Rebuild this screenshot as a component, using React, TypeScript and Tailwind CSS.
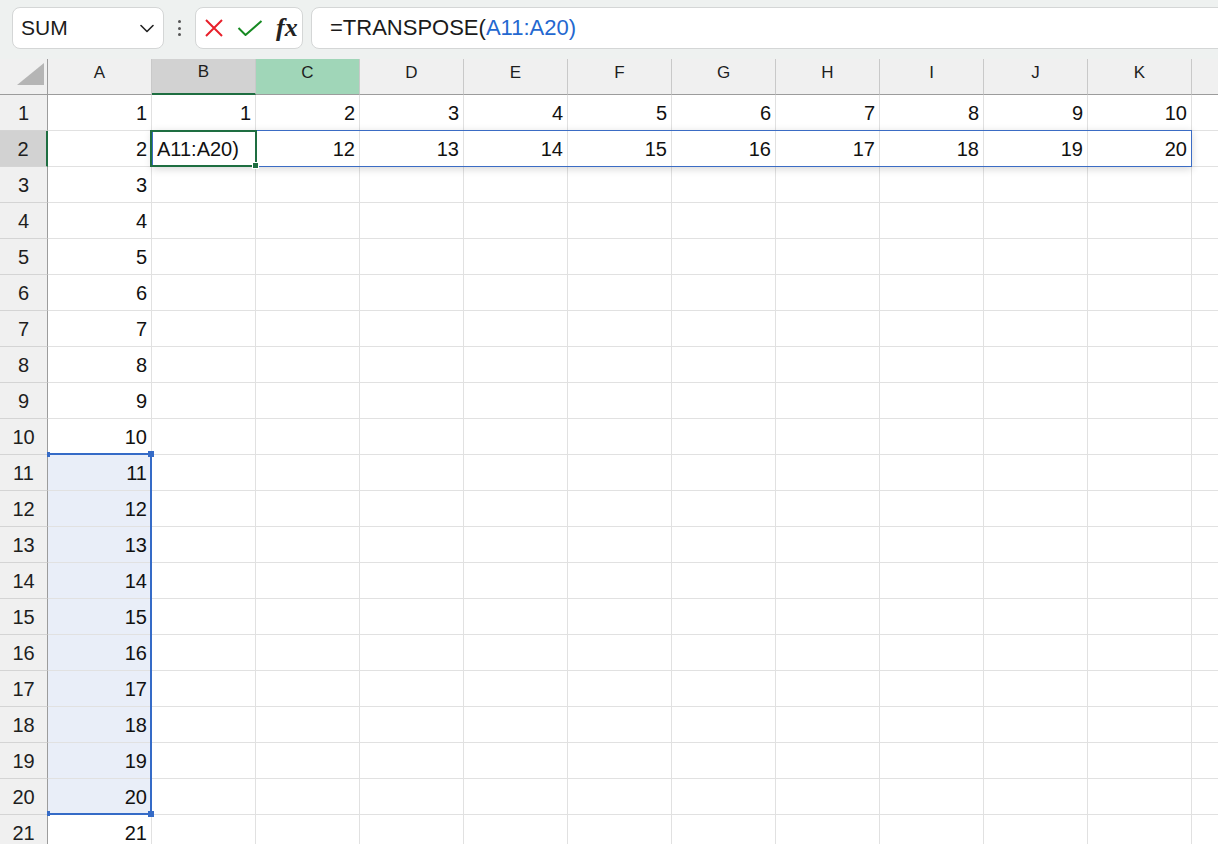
const COLS = ['A', 'B', 'C', 'D', 'E', 'F', 'G', 'H', 'I', 'J', 'K']
const ROWS = Array.from({ length: 21 }, (_, i) => i + 1)

// column A holds 1..21, row 1 holds 1..10 from B, row 2 is the spill of A11:A20
function cellValue(row: number, col: number) {
  if (col === 0) return String(row)
  if (row === 1) return String(col)
  if (row === 2 && col > 1) return String(col + 10)
  return ''
}

function NameBox() {
  return (
    <div className="flex h-[42px] w-[152px] items-center justify-between rounded-lg border border-[#d4d6d6] bg-white pl-[8px] pr-[9px]">
      <span className="text-[21px] text-[#1b1b1b]">SUM</span>
      <svg width="14" height="9" viewBox="0 0 14 9" fill="none">
        <path d="M1 1.5 L7 7.5 L13 1.5" stroke="#222" strokeWidth="1.6" strokeLinecap="round" strokeLinejoin="round" />
      </svg>
    </div>
  )
}

function FormulaButtons() {
  return (
    <div className="flex h-[42px] w-[108px] items-center rounded-lg border border-[#d4d6d6] bg-white pl-[8px]">
      <svg width="20" height="20" viewBox="0 0 20 20" fill="none">
        <path d="M2 2 L18 18 M18 2 L2 18" stroke="#e8202a" strokeWidth="2" />
      </svg>
      <svg className="ml-[13px]" width="26" height="16" viewBox="0 0 26 16" fill="none">
        <path d="M1.5 8 L8.5 15 L24.5 1" stroke="#168a22" strokeWidth="2" />
      </svg>
      <span className="ml-[13px] font-['Liberation_Serif',serif] text-[26px] font-bold italic leading-none text-[#222]">fx</span>
    </div>
  )
}

function Toolbar() {
  return (
    <div className="flex h-[59px] items-start overflow-hidden bg-[#eef1f0] pl-3 pt-[7px]">
      <NameBox />
      <div className="flex h-[42px] w-[31px] flex-col items-center justify-center gap-[3.5px]">
        <span className="h-[3px] w-[3px] rounded-full bg-[#555]" />
        <span className="h-[3px] w-[3px] rounded-full bg-[#555]" />
        <span className="h-[3px] w-[3px] rounded-full bg-[#555]" />
      </div>
      <FormulaButtons />
      <div className="-mr-4 ml-2 flex h-[42px] flex-1 items-center rounded-lg border border-[#d4d6d6] bg-white pb-[2px] pl-[18px] text-[22px] text-[#1b1b1b]">
        <span>=TRANSPOSE(</span>
        <span className="text-[#2468d0]">A11:A20)</span>
      </div>
    </div>
  )
}

function ColHeader({ label, index }: { label: string; index: number }) {
  let tone = 'bg-[#f0f0f0] border-b border-b-[#9c9c9c]'
  if (index === 1) tone = 'bg-[#d2d2d2] border-b-2 border-b-[#1e6e41]'
  if (index === 2) tone = 'bg-[#a0d6b8] border-b border-b-[#9c9c9c]'
  return (
    <div className={`flex items-center justify-center border-r border-r-[#c9c9c9] pb-[8px] text-[17px] text-[#1e1e1e] ${tone}`}>
      {label}
    </div>
  )
}

function RowHeader({ row }: { row: number }) {
  const active = row === 2
  return (
    <div
      className={
        active
          ? 'flex items-center justify-center border-b border-b-[#d4d4d4] border-r-2 border-r-[#1e6e41] bg-[#d2d2d2] text-[20px] text-[#1e1e1e]'
          : 'flex items-center justify-center border-b border-b-[#d4d4d4] border-r border-r-[#9c9c9c] bg-[#f0f0f0] text-[20px] text-[#1e1e1e]'
      }
    >
      {row}
    </div>
  )
}

function Cell({ row, col }: { row: number; col: number }) {
  const inRange = col === 0 && row >= 11 && row <= 20
  if (row === 2 && col === 1) {
    return (
      <div className="flex items-center border-b border-r border-[#e1e1e1] pl-[5px] text-[20px] text-[#111]">
        A11:A20)
      </div>
    )
  }
  return (
    <div
      className={`flex items-center justify-end border-b border-r border-[#e1e1e1] pr-[4px] text-[20px] text-[#111] ${
        inRange ? 'bg-[#e9eef8]' : 'bg-white'
      }`}
    >
      {cellValue(row, col)}
    </div>
  )
}

function Sheet() {
  return (
    <div className="relative grid grid-cols-[48px_repeat(11,104px)_1fr] auto-rows-[36px]">
      <div className="relative border-b border-r border-[#9c9c9c] bg-[#f0f0f0]">
        <svg className="absolute left-[17px] top-[4px]" width="28" height="23" viewBox="0 0 28 23">
          <path d="M27 0 L27 22 L0 22 Z" fill="#b5b5b5" />
        </svg>
      </div>
      {COLS.map((c, i) => (
        <ColHeader key={c} label={c} index={i} />
      ))}
      <div className="border-b border-b-[#9c9c9c] bg-[#f0f0f0]" />

      {ROWS.map((r) => (
        <div key={r} className="contents">
          <RowHeader row={r} />
          {COLS.map((c, i) => (
            <Cell key={c} row={r} col={i} />
          ))}
          <div className="border-b border-[#e1e1e1] bg-white" />
        </div>
      ))}

      {/* spill preview B2:K2 */}
      <div className="pointer-events-none absolute left-[152px] top-[71px] h-[37px] w-[1040px] border border-[#3b6cc4] shadow-[0_2px_8px_rgba(0,0,0,0.16)]" />

      {/* referenced range A11:A20 */}
      <div className="pointer-events-none absolute left-[48px] top-[394px] h-[362px] w-[104px] border-b-2 border-r-2 border-t-2 border-[#356bc7]">
        <span className="absolute -left-[1px] -top-[3px] h-[5px] w-[3px] bg-[#356bc7]" />
        <span className="absolute -right-[4px] -top-[4px] h-[6px] w-[6px] bg-[#356bc7]" />
        <span className="absolute -left-[1px] -bottom-[3px] h-[5px] w-[3px] bg-[#356bc7]" />
        <span className="absolute -right-[4px] -bottom-[4px] h-[6px] w-[6px] bg-[#356bc7]" />
      </div>

      {/* active cell B2 */}
      <div className="pointer-events-none absolute left-[150px] top-[71px] h-[37px] w-[107px] border-2 border-[#1e6e41]">
        <span className="absolute -bottom-[4px] -right-[4px] h-[7px] w-[7px] border border-white bg-[#1e6e41]" />
      </div>
    </div>
  )
}

export default function App() {
  return (
    <div className="h-[844px] w-[1218px] overflow-hidden bg-white font-['Liberation_Sans',Arial,sans-serif]">
      <Toolbar />
      <Sheet />
    </div>
  )
}
